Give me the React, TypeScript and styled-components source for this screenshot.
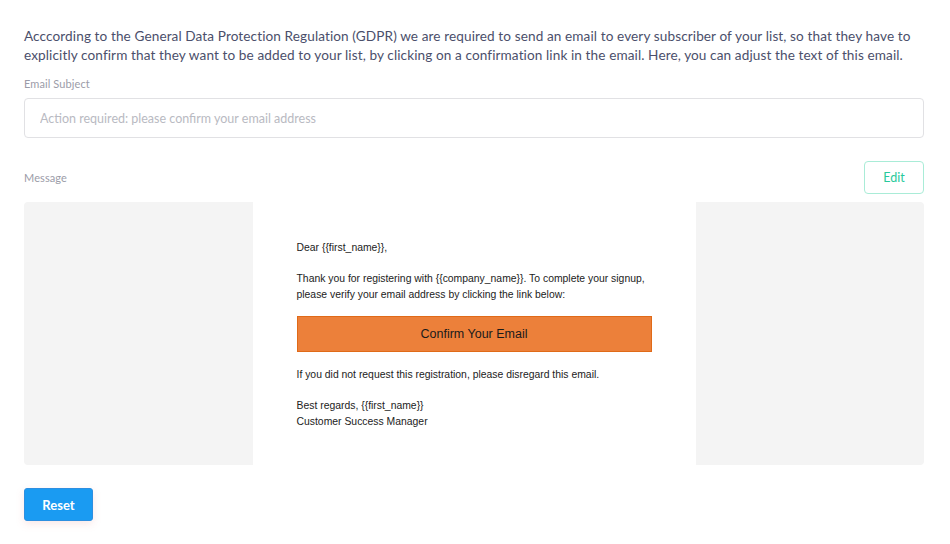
import styled, { createGlobalStyle } from "styled-components";

const GlobalStyle = createGlobalStyle`
  html, body {
    margin: 0;
    padding: 0;
    background: #ffffff;
  }
  body {
    font-family: "Lato", "Open Sans", sans-serif;
    -webkit-font-smoothing: antialiased;
  }
`;

const Page = styled.div`
  padding: 27px 26px 22px 24px;
  display: flex;
  flex-direction: column;
`;

const Intro = styled.p`
  margin: 0;
  font-size: 13.6px;
  line-height: 19px;
  color: #4b4f6b;
  letter-spacing: 0.1px;
`;

const Label = styled.div`
  font-size: 11px;
  color: #9b9ca8;
  letter-spacing: 0.1px;
`;

const Field = styled.div`
  margin-top: 12px;
  display: flex;
  flex-direction: column;
  gap: 8px;
`;

const Input = styled.input`
  height: 40px;
  box-sizing: border-box;
  border: 1px solid #e1e1e4;
  border-radius: 4px;
  padding: 0 15px;
  font-family: inherit;
  font-size: 12.5px;
  color: #333;
  outline: none;

  &::placeholder {
    color: #b9bac2;
  }
`;

const MessageHead = styled.div`
  margin-top: 23px;
  display: flex;
  justify-content: space-between;
  align-items: center;
`;

const EditButton = styled.button`
  width: 60px;
  height: 33px;
  border: 1px solid #a9ecd7;
  border-radius: 4px;
  background: #ffffff;
  color: #27c99b;
  font-family: inherit;
  font-size: 12.5px;
  cursor: pointer;
`;

const Preview = styled.div`
  margin-top: 8px;
  height: 263px;
  background: #f4f4f4;
  border-radius: 4px;
  display: flex;
  justify-content: center;
`;

const Sheet = styled.div`
  width: 443px;
  background: #ffffff;
  padding: 38px 44px 0 44px;
  box-sizing: border-box;
  font-family: "Liberation Sans", Arial, sans-serif;
  font-size: 10.4px;
  line-height: 16px;
  color: #222222;
`;

const Para = styled.p<{ $gap?: number }>`
  margin: 0 0 ${(p) => p.$gap ?? 15}px 0;
`;

const ConfirmButton = styled.div`
  height: 36px;
  width: 355px;
  box-sizing: border-box;
  background: #ec803a;
  border: 1px solid #e06a18;
  display: flex;
  align-items: center;
  justify-content: center;
  font-size: 12.5px;
  color: #1a1a1a;
  margin: 13px 0 15px 0;
`;

const Footer = styled.div`
  margin-top: 23px;
`;

const ResetButton = styled.button`
  width: 69px;
  height: 33px;
  border: 1px solid #2e8fe0;
  border-radius: 3px;
  background: #1a9bf2;
  color: #ffffff;
  font-family: inherit;
  font-weight: 700;
  font-size: 13px;
  box-shadow: 0 3px 8px rgba(230, 120, 120, 0.18);
  cursor: pointer;
`;

export default function App() {
  return (
    <>
      <GlobalStyle />
      <Page>
        <Intro>
          Acccording to the General Data Protection Regulation (GDPR) we are
          required to send an email to every subscriber of your list, so that
          they have to explicitly confirm that they want to be added to your
          list, by clicking on a confirmation link in the email. Here, you can
          adjust the text of this email.
        </Intro>

        <Field>
          <Label>Email Subject</Label>
          <Input placeholder="Action required: please confirm your email address" />
        </Field>

        <MessageHead>
          <Label>Message</Label>
          <EditButton>Edit</EditButton>
        </MessageHead>

        <Preview>
          <Sheet>
            <Para>Dear {"{{first_name}}"},</Para>
            <Para $gap={0}>
              Thank you for registering with {"{{company_name}}"}. To complete
              your signup, please verify your email address by clicking the
              link below:
            </Para>
            <ConfirmButton>Confirm Your Email</ConfirmButton>
            <Para>
              If you did not request this registration, please disregard this
              email.
            </Para>
            <Para $gap={0}>
              Best regards, {"{{first_name}}"}
              <br />
              Customer Success Manager
            </Para>
          </Sheet>
        </Preview>

        <Footer>
          <ResetButton>Reset</ResetButton>
        </Footer>
      </Page>
    </>
  );
}
